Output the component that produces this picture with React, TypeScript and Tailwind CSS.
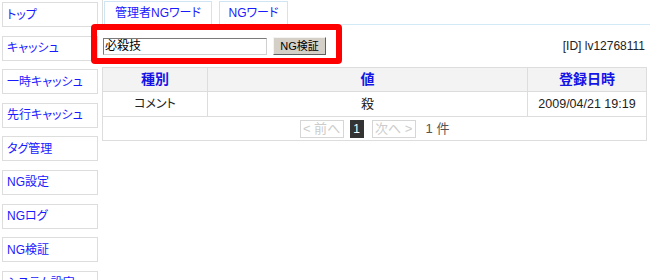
import React from "react";

const menu = [
  "トップ",
  "キャッシュ",
  "一時キャッシュ",
  "先行キャッシュ",
  "タグ管理",
  "NG設定",
  "NGログ",
  "NG検証",
  "システム設定",
];

export default function App() {
  return (
    <div className="relative flex w-[650px] h-[280px] overflow-hidden bg-white text-[12px] font-['Liberation_Sans','Noto_Sans_CJK_JP',sans-serif] [font-feature-settings:'palt']">
      {/* Sidebar */}
      <div className="w-[102px] shrink-0 flex flex-col gap-[8.6px] pl-[2px] pt-[2px]">
        {menu.map((m) => (
          <div
            key={m}
            className="w-[96px] h-[25px] shrink-0 border border-[#dddddd] flex items-center pl-[4px] text-[#1a1aff] leading-none"
          >
            {m}
          </div>
        ))}
      </div>

      {/* Main */}
      <div className="flex-1 flex flex-col">
        {/* Tabs */}
        <div className="h-[25px] border-l border-b border-l-[#dddddd] border-b-[#d2eaf6] flex items-end gap-[7px] pl-[1px]">
          <div className="w-[108px] h-[23px] border border-b-0 border-[#cfe5f4] flex items-center justify-center text-[#1a1aff]">
            管理者NGワード
          </div>
          <div className="w-[69px] h-[23px] border border-b-0 border-[#cfe5f4] flex items-center justify-center text-[#1a1aff]">
            NGワード
          </div>
        </div>

        {/* Form row */}
        <div className="h-[42px] flex items-center pl-[1px] pr-[5px]">
          <div className="w-[164px] h-[17px] border border-t-[#7a7a7a] border-l-[#7a7a7a] border-b-[#d0d0d0] border-r-[#d0d0d0] flex items-center pl-[1px] text-black">
            必殺技
          </div>
          <button className="ml-[6px] w-[53px] h-[18px] bg-[#d4d0c8] border border-t-[#f4f4f4] border-l-[#f4f4f4] border-b-[#606060] border-r-[#606060] text-[11px] text-black flex items-center justify-center">
            NG検証
          </button>
          <div className="ml-auto text-[#222222]">[ID] lv12768111</div>
        </div>

        {/* Table */}
        <div className="w-[545px] border border-[#dddddd]">
          <div className="flex h-[24px] bg-[#f3f3f3] border-b border-[#dddddd] text-[14px] font-bold text-[#1414e6]">
            <div className="w-[105px] flex items-center justify-center border-r border-[#dddddd]">種別</div>
            <div className="w-[320px] flex items-center justify-center border-r border-[#dddddd]">値</div>
            <div className="flex-1 flex items-center justify-center">登録日時</div>
          </div>
          <div className="flex h-[25px] border-b border-[#dddddd] text-[#222222]">
            <div className="w-[105px] flex items-center justify-center border-r border-[#dddddd]">コメント</div>
            <div className="w-[320px] flex items-center justify-center border-r border-[#dddddd] text-[13px]">殺</div>
            <div className="flex-1 flex items-center justify-center text-[12.5px]">2009/04/21 19:19</div>
          </div>
          <div className="h-[23px] flex items-center justify-center gap-[6px]">
            <div className="w-[44px] h-[18px] border border-[#d6d6d6] text-[#cccccc] flex items-center justify-center text-[13px]">
              &lt; 前へ
            </div>
            <div className="w-[14px] h-[18px] bg-[#333333] text-white flex items-center justify-center">1</div>
            <div className="ml-[2px] w-[44px] h-[18px] border border-[#d6d6d6] text-[#cccccc] flex items-center justify-center text-[13px]">
              次へ &gt;
            </div>
            <div className="ml-[4px] text-[#555555] text-[13px]">1 件</div>
          </div>
        </div>
      </div>

      {/* Red annotation box */}
      <div className="absolute left-[91px] top-[24px] w-[251px] h-[40px] border-[6px] border-[#ff0000] rounded-[4px]" />
    </div>
  );
}
